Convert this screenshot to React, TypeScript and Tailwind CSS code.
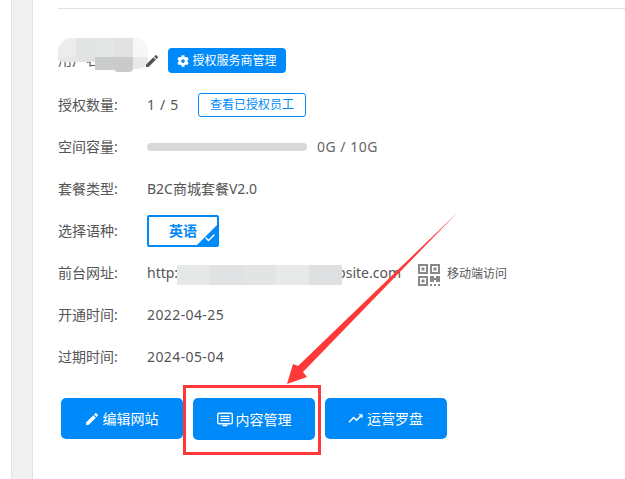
import { Check } from "lucide-react"
import { FaCog } from "react-icons/fa"
import { MdEdit, MdTrendingUp } from "react-icons/md"

const font = "font-['Noto_Sans','Noto_Sans_CJK_SC',sans-serif]"

const nameBlur = [
  { w: "w-[18px]", top: "bg-[#ececec] rounded-tl-[14px]", bottom: "h-[5px] bg-[#e6e6e6] rounded-bl-[4px]" },
  { w: "w-[19px]", top: "bg-[#e3e4e4]", bottom: "h-[5px] bg-[#e3e3e3]" },
  { w: "w-[19px]", top: "bg-[#e5e6e6]", bottom: "h-[13px] bg-[#c9cbcc]" },
  { w: "w-[19px]", top: "bg-[#e1e2e1]", bottom: "h-[15px] bg-[#c8cacc] rounded-b-[4px]" },
  { w: "w-[15px]", top: "bg-[#f6f7f7] rounded-tr-[12px]", bottom: "h-[12px] bg-[#e9e9e9] rounded-br-[10px]" },
]

const urlBlur = ["bg-[#e6e7e7]", "bg-[#e1e2e3]", "bg-[#e3e4e4]", "bg-[#e8e9e9]", "bg-[#dfe0e1]"]

function Row({ label, className, children }: { label: string; className: string; children: React.ReactNode }) {
  return (
    <div className={`flex items-center ${className}`}>
      <div className="-mt-[2px] w-[89px] shrink-0 text-[14px] text-[#555]">{label}:</div>
      {children}
    </div>
  )
}

function QrIcon() {
  return (
    <svg width="22" height="22" viewBox="0 0 22 22" fill="#888">
      <path d="M0 0h10v10H0zM2 2v6h6V2zM3.500 3.500h3v3h-3z" fillRule="evenodd" />
      <path d="M12 0h10v10H12zM14 2v6h6V2zM15.500 3.500h3v3h-3z" fillRule="evenodd" />
      <path d="M0 12h10v10H0zM2 14v6h6v-6zM3.500 15.500h3v3h-3z" fillRule="evenodd" />
      <path d="M12 12h4v2h2v-2h4v6h-4v-2h-2v2h-4zM12 20h2v2h-2zM16 20h2v2h-2zM20 20h2v2h-2z" />
    </svg>
  )
}

function ScreenIcon() {
  return (
    <svg width="16" height="15" viewBox="0 0 16 15" fill="none">
      <rect x="0.700" y="1.200" width="14.600" height="10.600" rx="1.500" stroke="white" strokeWidth="1.400" />
      <path d="M3.500 4.300h9M3.500 6.500h9M3.500 8.700h9" stroke="white" strokeWidth="1.200" />
      <path d="M5.500 13.500h5" stroke="white" strokeWidth="1.500" />
    </svg>
  )
}

function ActionButton({ className, children }: { className: string; children: React.ReactNode }) {
  return (
    <button className={`flex w-[122px] items-center justify-center gap-[3px] rounded-[5px] bg-[#0089f8] text-[14px] text-white ${className}`}>
      {children}
    </button>
  )
}

export default function App() {
  return (
    <div className={`relative flex h-[479px] w-[625px] overflow-hidden bg-white ${font}`}>
      {/* left gutter */}
      <div className="ml-[11px] h-full w-[22px] border-x border-[#e2e2e2] bg-[#f0f0f0]" />

      <div className="ml-[25px] flex w-[567px] flex-col">
        <div className="mt-[8px] border-t border-[#dfdfdf]" />

        <Row label="用户名称" className="mt-[39px] h-[25px]">
          <MdEdit size={16} className="-ml-[3px] text-[#555]" />
          <button className="ml-[8px] flex h-[25px] w-[118px] items-center justify-center gap-[3px] rounded-[4px] bg-[#0089f8] text-[12px] text-white">
            <FaCog size={12} />
            授权服务商管理
          </button>
        </Row>

        <Row label="授权数量" className="mt-[20px] h-[24px]">
          <span className="-mt-[2px] w-[51px] text-[14px] tracking-[0.7px] text-[#555]">1 / 5</span>
          <button className="flex h-[24px] w-[108px] items-center justify-center rounded-[3px] border border-[#0089f8] text-[12px] text-[#0089f8]">
            查看已授权员工
          </button>
        </Row>

        <Row label="空间容量" className="mt-[18px] h-[24px]">
          <div className="h-[8px] w-[160px] rounded-full bg-[#d8d8d8]" />
          <span className="-mt-[2px] ml-[10px] text-[14px] tracking-[0.5px] text-[#666]">0G / 10G</span>
        </Row>

        <Row label="套餐类型" className="mt-[18px] h-[24px]">
          <span className="-mt-[2px] text-[14px] text-[#555]">B2C商城套餐V2.0</span>
        </Row>

        <Row label="选择语种" className="mt-[14px] h-[32px]">
          <div className="relative flex h-[32px] w-[72px] items-center justify-center overflow-hidden rounded-[2px] border-2 border-[#0089f8] pb-[2px] text-[14px] font-bold text-[#0089f8]">
            英语
            <div className="absolute bottom-0 right-0 h-0 w-0 border-b-[20px] border-l-[20px] border-b-[#0089f8] border-l-transparent" />
            <Check className="absolute bottom-[1px] right-[1px] text-white" size={12} strokeWidth={3} />
          </div>
        </Row>

        <Row label="前台网址" className="mt-[14px] h-[24px]">
          <div className="-mt-[2px] flex w-[254px] justify-between text-[14px] text-[#555]">
            <span>http://</span>
            <span>website.com</span>
          </div>
          <div className="ml-[17px] mt-[3px]">
            <QrIcon />
          </div>
          <span className="ml-[7px] mt-[1px] text-[12px] text-[#555]">移动端访问</span>
        </Row>

        <Row label="开通时间" className="mt-[18px] h-[24px]">
          <span className="-mt-[2px] text-[14px] tracking-[0.4px] text-[#555]">2022-04-25</span>
        </Row>

        <Row label="过期时间" className="mt-[18px] h-[24px]">
          <span className="-mt-[2px] text-[14px] tracking-[0.4px] text-[#555]">2024-05-04</span>
        </Row>

        <div className="ml-[3px] mt-[29px] flex gap-[10px]">
          <ActionButton className="h-[41px] pr-[2px]">
            <MdEdit size={16} />
            编辑网站
          </ActionButton>
          <ActionButton className="h-[42px]">
            <ScreenIcon />
            内容管理
          </ActionButton>
          <ActionButton className="h-[41px] pr-[2px]">
            <MdTrendingUp size={17} />
            运营罗盘
          </ActionButton>
        </div>
      </div>

      {/* mosaic over the account name */}
      <div className="absolute left-[58px] top-[38px] flex">
        {nameBlur.map((cell, i) => (
          <div key={i} className={cell.w}>
            <div className={`h-[19px] ${cell.top}`} />
            <div className={cell.bottom} />
          </div>
        ))}
      </div>

      {/* mosaic over the url */}
      <div className="absolute left-[177px] top-[265px] flex h-[20px]">
        {urlBlur.map((bg, i) => (
          <div key={i} className={`w-[33px] ${bg}`} />
        ))}
      </div>

      {/* red annotation */}
      <svg className="absolute left-0 top-0" width="625" height="479">
        <polygon points="457,213 298,366 293,364 287,384 307,377 303,372" fill="#ff3838" />
      </svg>
      <div className="absolute left-[183px] top-[385px] h-[70px] w-[138px] border-[3px] border-[#ff3838]" />
    </div>
  )
}
